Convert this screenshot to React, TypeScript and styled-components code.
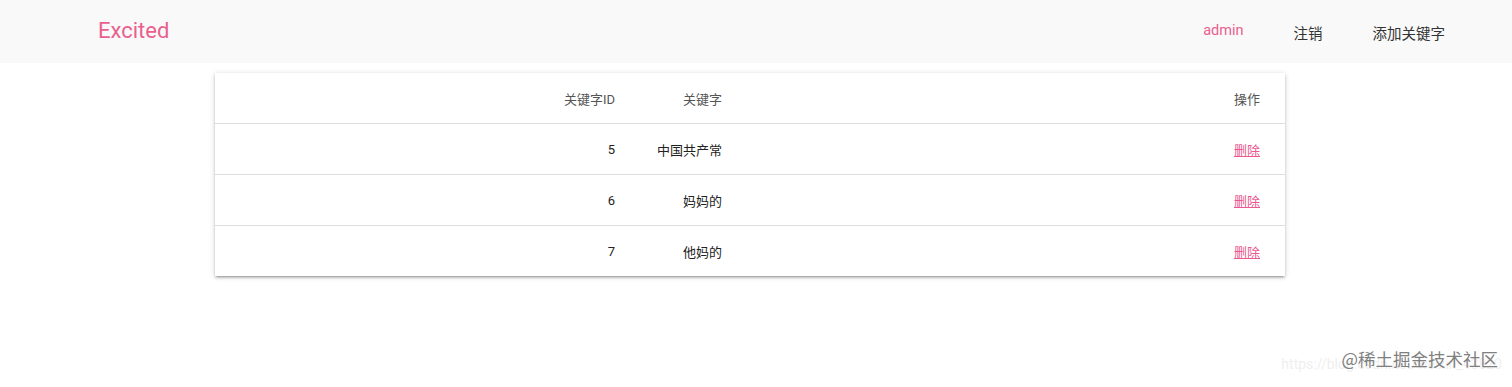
import React from 'react';
import styled, { createGlobalStyle } from 'styled-components';

interface Keyword {
  id: number;
  word: string;
}

const keywords: Keyword[] = [
  { id: 5, word: '中国共产常' },
  { id: 6, word: '妈妈的' },
  { id: 7, word: '他妈的' },
];

const GlobalStyle = createGlobalStyle`
  body {
    margin: 0;
    background: #fff;
    font-family: Roboto, "Noto Sans CJK SC", sans-serif;
  }
`;

const Page = styled.div`
  position: relative;
  min-height: 387px;
`;

const Nav = styled.nav`
  height: 63px;
  background: #f9f9f9;
  display: flex;
  align-items: center;
  justify-content: space-between;
  padding: 0 67px 0 98px;
`;

const Logo = styled.a`
  color: #e9608f;
  font-size: 22px;
  text-decoration: none;
  margin-top: -2px;
`;

const Menu = styled.ul`
  list-style: none;
  display: flex;
  gap: 50px;
  margin: 1px 0 0;
  padding: 0;
`;

const MenuItem = styled.li<{ $accent?: boolean }>`
  font-size: 14.5px;
  color: ${(p) => (p.$accent ? '#e9608f' : '#333')};
`;

const Card = styled.div`
  width: 1070px;
  margin: 10px 0 0 215px;
  background: #fff;
  box-shadow: 0 2px 2px 0 rgba(0, 0, 0, 0.14), 0 3px 1px -2px rgba(0, 0, 0, 0.12),
    0 1px 5px 0 rgba(0, 0, 0, 0.2);
`;

const Row = styled.div<{ $last?: boolean }>`
  display: grid;
  grid-template-columns: 405px 107px 1fr;
  height: 50px;
  align-items: center;
  border-bottom: ${(p) => (p.$last ? 'none' : '1px solid #dedede')};
  font-size: 13px;
`;

const Cell = styled.div<{ $head?: boolean; $end?: boolean }>`
  text-align: right;
  padding-right: ${(p) => (p.$end ? '25px' : '5px')};
  color: ${(p) => (p.$head ? '#555' : '#222')};
`;

const DeleteLink = styled.a`
  color: #e9588f;
  text-decoration: underline;
  cursor: pointer;
`;

const Watermark = styled.div`
  position: absolute;
  right: 14px;
  bottom: 16px;
  font-size: 17.5px;
  color: #808080;
  font-family: "Noto Sans CJK SC", sans-serif;
`;

const FaintUrl = styled.span`
  position: absolute;
  right: -4px;
  top: 10px;
  font-size: 14px;
  color: #efefef;
  white-space: nowrap;
  font-family: Roboto, sans-serif;
  z-index: -1;
`;

export default function App() {
  return (
    <Page>
      <GlobalStyle />
      <Nav>
        <Logo>Excited</Logo>
        <Menu>
          <MenuItem $accent>admin</MenuItem>
          <MenuItem>注销</MenuItem>
          <MenuItem>添加关键字</MenuItem>
        </Menu>
      </Nav>
      <Card>
        <Row>
          <Cell $head>关键字ID</Cell>
          <Cell $head>关键字</Cell>
          <Cell $head $end>操作</Cell>
        </Row>
        {keywords.map((k, i) => (
          <Row key={k.id} $last={i === keywords.length - 1}>
            <Cell>{k.id}</Cell>
            <Cell>{k.word}</Cell>
            <Cell $end>
              <DeleteLink>删除</DeleteLink>
            </Cell>
          </Row>
        ))}
      </Card>
      <Watermark>
        @稀土掘金技术社区
        <FaintUrl>https://blog.csdn.net/weixin_43820</FaintUrl>
      </Watermark>
    </Page>
  );
}
